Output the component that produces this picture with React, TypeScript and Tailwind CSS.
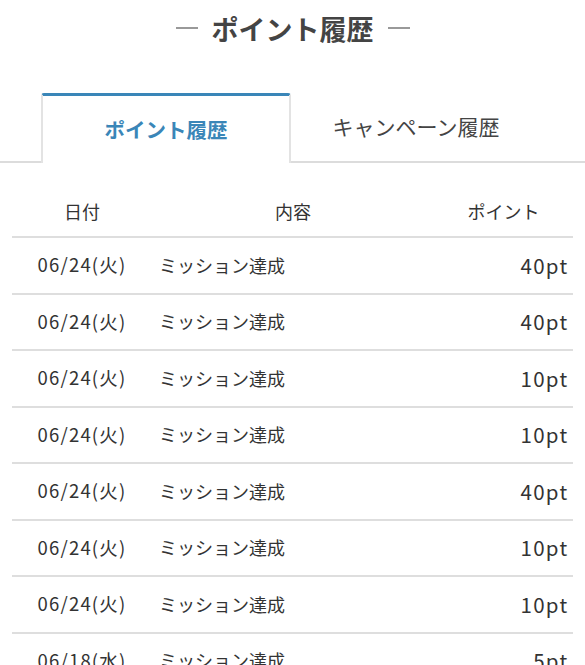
import React from "react";

const rows = [
  { date: "06/24(火)", text: "ミッション達成", pt: "40pt" },
  { date: "06/24(火)", text: "ミッション達成", pt: "40pt" },
  { date: "06/24(火)", text: "ミッション達成", pt: "10pt" },
  { date: "06/24(火)", text: "ミッション達成", pt: "10pt" },
  { date: "06/24(火)", text: "ミッション達成", pt: "40pt" },
  { date: "06/24(火)", text: "ミッション達成", pt: "10pt" },
  { date: "06/24(火)", text: "ミッション達成", pt: "10pt" },
  { date: "06/18(水)", text: "ミッション達成", pt: "5pt" },
];

export default function App() {
  return (
    <div className="w-[585px] h-[665px] overflow-hidden bg-white font-['Noto_Sans_CJK_JP','Noto_Sans',sans-serif] text-[#333]">
      <div className="h-[56px] flex items-center justify-center gap-[14px]">
        <span className="block w-[22px] h-[2px] bg-[#999]" />
        <h1 className="text-[27px] font-bold text-[#444] leading-none">ポイント履歴</h1>
        <span className="block w-[22px] h-[2px] bg-[#999]" />
      </div>

      <div className="mt-[37px] flex pl-[41px] border-b-2 border-[#dcdcdc]">
        <div className="w-[250px] h-[70px] -mb-[2px] bg-white border-t-[3px] border-t-[#3a86b8] border-x-2 border-x-[#e3e3e3] rounded-t-[3px] flex items-center justify-center text-[20.5px] font-bold text-[#3a86b8]">
          ポイント履歴
        </div>
        <div className="w-[250px] h-[68px] flex items-center justify-center text-[21px] text-[#444]">
          キャンペーン履歴
        </div>
      </div>

      <div className="mx-[12px] mt-[23px]">
        <div className="grid grid-cols-[140px_1fr_139px] h-[52px] items-center border-b-2 border-[#dedede] text-[18px] text-[#333]">
          <div className="text-center">日付</div>
          <div className="text-center">内容</div>
          <div className="text-center">ポイント</div>
        </div>
        {rows.map((r, i) => (
          <div
            key={i}
            className="grid grid-cols-[140px_1fr_139px] h-[56.5px] items-center border-b-2 border-[#dedede]"
          >
            <div className="text-center text-[18.5px] tracking-[1.2px]">{r.date}</div>
            <div className="pl-[7px] text-[18px]">{r.text}</div>
            <div className="text-right pr-[4.5px] text-[20.5px] tracking-[1.3px]">{r.pt}</div>
          </div>
        ))}
      </div>
    </div>
  );
}
